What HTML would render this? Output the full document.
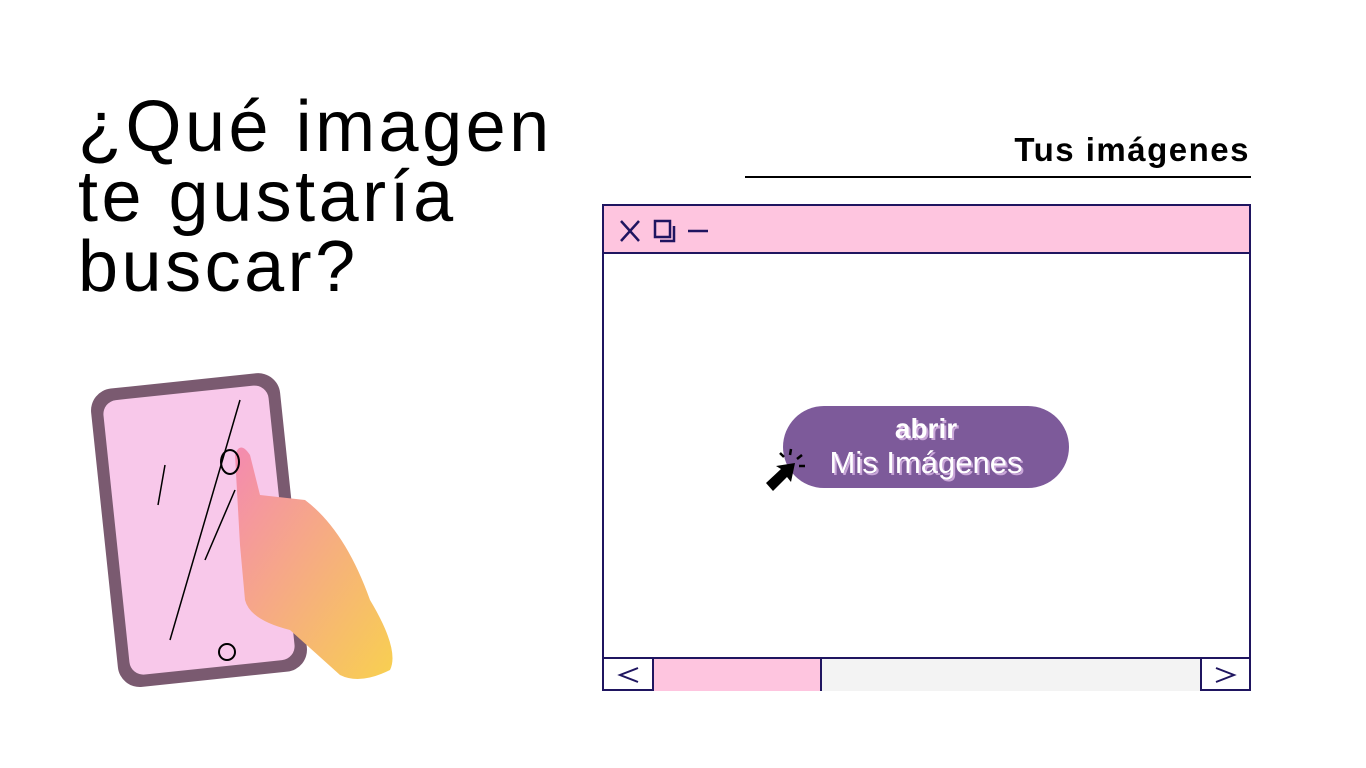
<!DOCTYPE html>
<html><head><meta charset="utf-8"><style>
body{margin:0;width:1366px;height:768px;background:#fff;position:relative;overflow:hidden;font-family:"Liberation Sans",sans-serif}
.t{position:absolute;left:78px;top:92px;font-size:72px;line-height:70px;color:#000;letter-spacing:3.5px}
.tus{position:absolute;right:116px;top:131px;font-size:33px;font-weight:bold;color:#000;letter-spacing:1.5px}
.ln{position:absolute;left:745px;top:176px;width:506px;height:2px;background:#000}
.win{position:absolute;left:602px;top:204px;width:645px;height:483px;border:2px solid #1f1560}
.bar{position:absolute;left:0;top:0;width:645px;height:46px;background:#fec5df;border-bottom:2px solid #1f1560}
.bot{position:absolute;left:0;top:451px;width:645px;height:32px;border-top:2px solid #1f1560;display:flex}
.bot div{height:32px;box-sizing:border-box}
.btn{position:absolute;left:783px;top:406px;width:286px;height:82px;border-radius:41px;background:#7d5a9a;color:#fff;text-align:center;font-size:31px;line-height:34px;text-shadow:2px 2px 0 #c9a6d8}
</style></head><body>
<div class="t">¿Qué imagen<br>te gustaría<br>buscar?</div>
<div class="tus">Tus imágenes</div>
<div class="ln"></div>
<div class="win">
<div class="bar"><svg width="120" height="46"><path d="M17 15L35 35M35 15L17 35" stroke="#1f1560" stroke-width="2.5"/><rect x="51" y="15" width="15" height="16" fill="none" stroke="#1f1560" stroke-width="2.5"/><path d="M56 35H70V20" fill="none" stroke="#1f1560" stroke-width="2.5"/><path d="M84 25H104" stroke="#1f1560" stroke-width="2.5"/></svg></div>
<div class="bot"><div style="width:50px;border-right:2px solid #1f1560;position:relative"><svg width="48" height="32"><path d="M34 9L16 16L34 23" fill="none" stroke="#1f1560" stroke-width="2"/></svg></div><div style="width:168px;background:#fec5df;border-right:2px solid #1f1560"></div><div style="width:380px;background:#f3f3f3;border-right:2px solid #1f1560"></div><div style="width:47px"><svg width="47" height="32"><path d="M14 9L32 16L14 23" fill="none" stroke="#1f1560" stroke-width="2"/></svg></div></div>
</div>
<div class="btn"><div style="margin-top:6px;font-weight:bold;font-size:28px">abrir</div><div>Mis Imágenes</div></div>
<svg style="position:absolute;left:760px;top:445px" width="50" height="55"><path d="M6 38L21 24L16 21L35 18L31 37L27 32L13 46Z" fill="#000"/><path d="M30 10L31 4M37 14L42 10M39 21L45 21M24 12L20 8" stroke="#000" stroke-width="2.5"/></svg>
<svg style="position:absolute;left:90px;top:370px" width="320" height="320">
<defs><linearGradient id="e" x1="0" y1="0" x2="0" y2="1"><stop offset="0" stop-color="#e86ad0"/><stop offset="1" stop-color="#22a8c8"/></linearGradient><linearGradient id="h" x1="0" y1="0" x2="1" y2="1"><stop offset="0" stop-color="#f48ab0"/><stop offset="1" stop-color="#f8d050"/></linearGradient></defs>
<path d="M8 40Q5 25 25 25L40 300Q45 312 60 310L50 312Q38 312 36 300Z" fill="url(#e)"/>
<rect x="14" y="10" width="190" height="300" rx="22" transform="rotate(-6 110 160)" fill="#7a5a70"/>
<rect x="26" y="22" width="166" height="276" rx="14" transform="rotate(-6 110 160)" fill="#f8c8ea"/>
<path d="M145 85Q150 70 160 85L170 125L215 130Q255 160 280 230Q310 280 300 300Q270 315 250 305L200 260Q160 250 155 230L150 175Z" fill="url(#h)"/>
<ellipse cx="140" cy="92" rx="9" ry="12" fill="none" stroke="#000" stroke-width="2"/>
<circle cx="137" cy="282" r="8" fill="none" stroke="#000" stroke-width="2"/>
<path d="M150 30L80 270M75 95L68 135M145 120L115 190" stroke="#000" stroke-width="1.5"/>
</svg>
</body></html>
